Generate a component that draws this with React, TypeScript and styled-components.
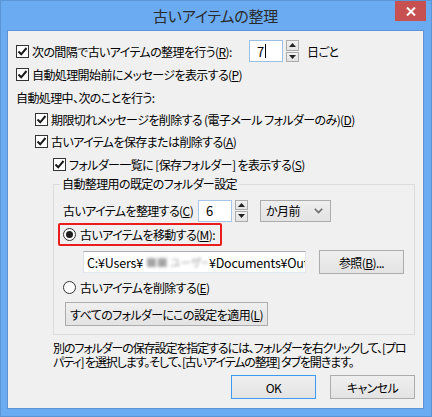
import React from "react";
import styled, { createGlobalStyle } from "styled-components";

const GlobalStyle = createGlobalStyle`
  html, body {
    margin: 0;
    padding: 0;
    background: #6aabf2;
  }
  * {
    box-sizing: border-box;
  }
`;

const FONT = `"Noto Sans CJK JP", "Noto Sans", sans-serif`;

// Window frame
const Frame = styled.div`
  width: 432px;
  height: 417px;
  background: #6aabf2;
  border: 1px solid #5a95d8;
  padding: 0 7px 7px 6px;
  display: flex;
  flex-direction: column;
  font-family: ${FONT};
  font-feature-settings: "palt";
  font-size: 12px;
  letter-spacing: -0.6px;
  color: #000;
`;

const TitleBar = styled.div`
  height: 29px;
  position: relative;
  display: flex;
  align-items: center;
  justify-content: center;
  font-size: 15px;
  letter-spacing: -0.2px;
  color: #2a2a2a;
  padding-bottom: 1px;
`;

const CloseButton = styled.div`
  position: absolute;
  right: -2px;
  top: 0;
  width: 31px;
  height: 20px;
  background: #c75050;
  display: flex;
  align-items: center;
  justify-content: center;
`;

const Content = styled.div`
  flex: 1;
  background: #f0f0f0;
  border: 1px solid #5b93d6;
  padding: 8px 0 0 0;
  display: flex;
  flex-direction: column;
`;

const Row = styled.div<{ $indent: number; $h: number }>`
  display: flex;
  align-items: center;
  height: ${(p) => p.$h}px;
  padding-left: ${(p) => p.$indent}px;
  white-space: nowrap;
`;

const CheckLabel = styled.label<{ $width?: number }>`
  display: flex;
  align-items: center;
  gap: 3px;
  flex-shrink: 0;
  width: ${(p) => (p.$width ? `${p.$width}px` : "auto")};
`;

const Box = styled.span`
  width: 13px;
  height: 13px;
  border: 1px solid #333;
  background: #fff;
  display: inline-flex;
  align-items: center;
  justify-content: center;
  flex-shrink: 0;
`;

const RadioCircle = styled.span`
  width: 13px;
  height: 13px;
  border: 1px solid #333;
  border-radius: 50%;
  background: #fff;
  display: inline-flex;
  align-items: center;
  justify-content: center;
  flex-shrink: 0;
`;

const RadioDot = styled.span`
  width: 7px;
  height: 7px;
  border-radius: 50%;
  background: #1e1e1e;
`;

const NumberBox = styled.div<{ $focus?: boolean }>`
  width: 34px;
  height: 22px;
  background: #fff;
  border: 1px solid ${(p) => (p.$focus ? "#9cbfe6" : "#a7c6e8")};
  display: flex;
  align-items: center;
  padding-left: 7px;
  font-size: 13px;
  flex-shrink: 0;
`;

const Caret = styled.span`
  display: inline-block;
  width: 1px;
  height: 14px;
  background: #000;
  margin-left: 1px;
`;

const Spinner = styled.div<{ $ml: number }>`
  display: flex;
  flex-direction: column;
  gap: 1px;
  margin-left: ${(p) => p.$ml}px;
  height: 22px;
  flex-shrink: 0;
`;

const SpinButton = styled.div`
  width: 13px;
  flex: 1;
  border: 1px solid #acacac;
  background: linear-gradient(#f2f2f2, #e2e2e2);
  display: flex;
  align-items: center;
  justify-content: center;
`;

const Suffix = styled.span`
  margin-left: 8px;
`;

const Group = styled.fieldset`
  margin: 0 8px 0 45px;
  border: 1px solid #dcdcdc;
  padding: 7px 8px 8px 9px;
  display: flex;
  flex-direction: column;
  min-width: 0;
`;

const Legend = styled.legend`
  padding: 0 2px;
  margin-left: -3px;
  line-height: 16px;
`;

const InlineLabel = styled.span<{ $width: number }>`
  width: ${(p) => p.$width}px;
  flex-shrink: 0;
`;

const Select = styled.div`
  width: 71px;
  height: 22px;
  margin-left: 12px;
  border: 1px solid #acacac;
  background: linear-gradient(#eeeeee, #e3e3e3);
  display: flex;
  align-items: center;
  justify-content: space-between;
  padding: 0 7px 0 5px;
  flex-shrink: 0;
`;

const Highlight = styled.div`
  display: flex;
  align-items: center;
  gap: 4px;
  height: 23px;
  margin-left: -5px;
  margin-top: 1px;
  padding: 0 5px 0 3px;
  border: 2px solid #ea1c1c;
  border-radius: 2px;
  align-self: flex-start;
`;

const RadioLabel = styled.div`
  display: flex;
  align-items: center;
  gap: 4px;
`;

const PathRow = styled.div`
  display: flex;
  align-items: center;
  margin-top: 4px;
  margin-left: 20px;
  height: 24px;
`;

const PathInput = styled.div`
  width: 223px;
  height: 22px;
  background: #fff;
  border: 1px solid #abadb3;
  border-color: #abadb3 #e2e3ea #e3e9ef #dbdfe6;
  padding-left: 3px;
  display: flex;
  align-items: center;
  overflow: hidden;
  white-space: nowrap;
  font-size: 12.5px;
  letter-spacing: -0.2px;
  flex-shrink: 0;
`;

const Blurred = styled.span`
  display: inline-block;
  width: 64px;
  margin: 0 1px;
  padding: 0 2px;
  color: #a4a4a4;
  font-size: 11px;
  filter: blur(1.4px);
  overflow: hidden;
  flex-shrink: 0;
`;

const Button = styled.div<{ $w: number; $default?: boolean }>`
  width: ${(p) => p.$w}px;
  height: 24px;
  border: 1px solid ${(p) => (p.$default ? "#3c9af0" : "#acacac")};
  background: linear-gradient(#efefef, #e3e3e3);
  display: flex;
  align-items: center;
  justify-content: center;
  flex-shrink: 0;
  white-space: nowrap;
`;

const BrowseButton = styled(Button)`
  margin-left: 13px;
`;

const ApplyButton = styled(Button)`
  margin-left: 2px;
  margin-top: 2px;
`;

const Info = styled.div`
  margin: 6px 0 0 45px;
  display: flex;
  flex-direction: column;
  letter-spacing: -1.1px;
  white-space: nowrap;
`;

const InfoLine = styled.span`
  height: 14px;
  line-height: 14px;
`;

const Footer = styled.div`
  display: flex;
  justify-content: flex-end;
  gap: 14px;
  margin-top: 6px;
  padding-right: 8px;
`;

const Check = () => (
  <Box>
    <svg width="11" height="11" viewBox="0 0 11 11">
      <path d="M1.5 5.5 L4.2 8.3 L9.5 2" fill="none" stroke="#1a1a1a" strokeWidth="2" />
    </svg>
  </Box>
);

const Arrow = ({ up }: { up?: boolean }) => (
  <svg width="7" height="4" viewBox="0 0 7 4">
    <path d={up ? "M0 4 L3.5 0 L7 4 Z" : "M0 0 L7 0 L3.5 4 Z"} fill="#222" />
  </svg>
);

const Spin = ({ ml }: { ml: number }) => (
  <Spinner $ml={ml}>
    <SpinButton>
      <Arrow up />
    </SpinButton>
    <SpinButton>
      <Arrow />
    </SpinButton>
  </Spinner>
);

export default function App() {
  return (
    <>
      <GlobalStyle />
      <Frame>
        <TitleBar>
          古いアイテムの整理
          <CloseButton>
            <svg width="10" height="9" viewBox="0 0 10 9">
              <path d="M1 0.5 L9 8.5 M9 0.5 L1 8.5" stroke="#fff" strokeWidth="2" />
            </svg>
          </CloseButton>
        </TitleBar>
        <Content>
          <Row $indent={8} $h={24}>
            <CheckLabel $width={233}>
              <Check />
              <span>
                次の間隔で古いアイテムの整理を行う(<u>R</u>):
              </span>
            </CheckLabel>
            <NumberBox $focus>
              7<Caret />
            </NumberBox>
            <Spin ml={3} />
            <Suffix>日ごと</Suffix>
          </Row>
          <Row $indent={8} $h={23}>
            <CheckLabel>
              <Check />
              <span>
                自動処理開始前にメッセージを表示する(<u>P</u>)
              </span>
            </CheckLabel>
          </Row>
          <Row $indent={8} $h={22}>
            自動処理中、次のことを行う:
          </Row>
          <Row $indent={27} $h={22}>
            <CheckLabel>
              <Check />
              <span>
                期限切れメッセージを削除する (電子メール フォルダーのみ)(<u>D</u>)
              </span>
            </CheckLabel>
          </Row>
          <Row $indent={27} $h={22}>
            <CheckLabel>
              <Check />
              <span>
                古いアイテムを保存または削除する(<u>A</u>)
              </span>
            </CheckLabel>
          </Row>
          <Row $indent={45} $h={24}>
            <CheckLabel>
              <Check />
              <span>
                フォルダー一覧に [保存フォルダー] を表示する(<u>S</u>)
              </span>
            </CheckLabel>
          </Row>
          <Group>
            <Legend>自動整理用の既定のフォルダー設定</Legend>
            <Row $indent={0} $h={23}>
              <InlineLabel $width={135}>
                古いアイテムを整理する(<u>C</u>)
              </InlineLabel>
              <NumberBox>6</NumberBox>
              <Spin ml={3} />
              <Select>
                <span>か月前</span>
                <svg width="9" height="6" viewBox="0 0 9 6">
                  <path d="M0.8 0.8 L4.5 4.6 L8.2 0.8" fill="none" stroke="#6a6a6a" strokeWidth="1.6" />
                </svg>
              </Select>
            </Row>
            <Highlight>
              <RadioCircle>
                <RadioDot />
              </RadioCircle>
              <span>
                古いアイテムを移動する(<u>M</u>):
              </span>
            </Highlight>
            <PathRow>
              <PathInput>
                C:¥Users¥<Blurred>■■ ユーザー</Blurred>¥Documents¥Outlook
              </PathInput>
              <BrowseButton $w={85}>
                参照(<u>B</u>)...
              </BrowseButton>
            </PathRow>
            <Row $indent={0} $h={26}>
              <RadioLabel>
                <RadioCircle />
                <span>
                  古いアイテムを削除する(<u>E</u>)
                </span>
              </RadioLabel>
            </Row>
            <ApplyButton $w={203}>
              すべてのフォルダーにこの設定を適用(<u>L</u>)
            </ApplyButton>
          </Group>
          <Info>
            <InfoLine>別のフォルダーの保存設定を指定するには、フォルダーを右クリックして、[プロ</InfoLine>
            <InfoLine>パティ] を選択します。そして、[古いアイテムの整理] タブを開きます。</InfoLine>
          </Info>
          <Footer>
            <Button $w={85} $default>
              OK
            </Button>
            <Button $w={85}>キャンセル</Button>
          </Footer>
        </Content>
      </Frame>
    </>
  );
}
